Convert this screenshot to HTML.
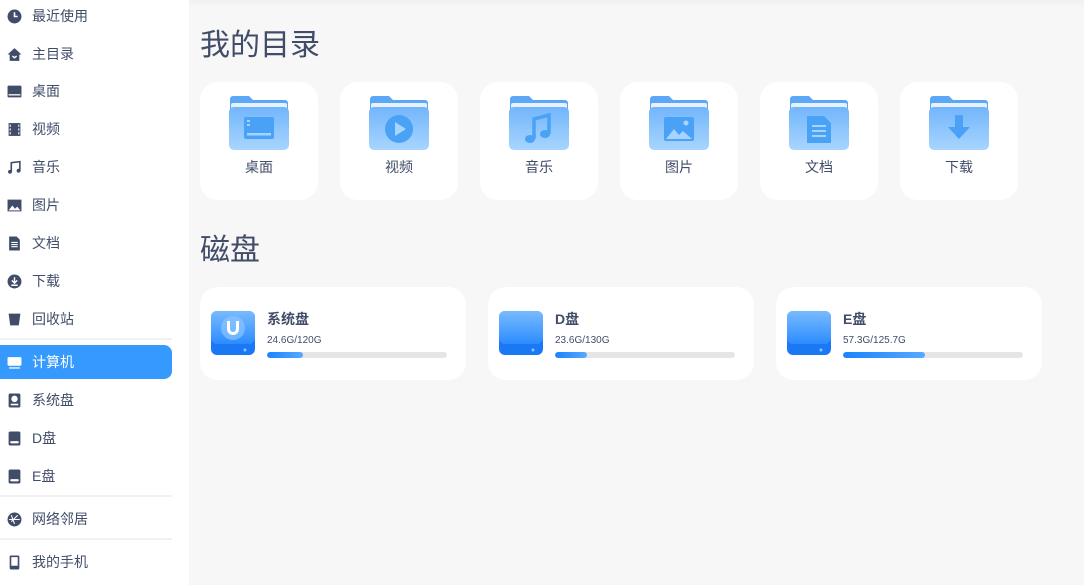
<!DOCTYPE html><html><head><meta charset="utf-8"><style>
*{margin:0;padding:0;box-sizing:border-box}
body{width:1084px;height:585px;overflow:hidden;background:#f7f7f7;font-family:"Liberation Sans","Noto Sans CJK SC",sans-serif;color:#414d68;position:relative}
.sb{position:absolute;left:0;top:0;width:189px;height:585px;background:#fff}
.it{position:absolute;left:0;width:172px;height:34px;display:flex;align-items:center;font-size:14px;color:#414d68}
.it svg{position:absolute;left:7px;width:15px;height:15px}
.it span{position:absolute;left:32px}
.sel{background:#3599fe;color:#fff;border-radius:0 8px 8px 0;}
.sep{position:absolute;left:0;width:172px;height:2px;background:#f1f1f1}
h1{position:absolute;left:200px;font-size:30px;font-weight:normal;color:#414d68}
.card{position:absolute;top:82px;width:118px;height:118px;background:#fff;border-radius:18px}
.card svg{position:absolute;left:29px;top:13px}
.card span{position:absolute;left:0;right:0;top:75px;text-align:center;font-size:14px}
.disk{position:absolute;top:287px;width:266px;height:93px;background:#fff;border-radius:18px}
.disk .ic{position:absolute;left:11px;top:24px}
.disk b{position:absolute;left:67px;top:22px;font-size:14px}
.disk i{position:absolute;left:67px;top:48px;font-size:10px;font-style:normal}
.bar{position:absolute;left:67px;top:65px;width:180px;height:6px;border-radius:3px;background:#e5e5e5;overflow:hidden}
.bar div{height:6px;border-radius:3px;background:linear-gradient(90deg,#1a84ff,#56a9ff)}
</style></head><body>
<svg width="0" height="0" style="position:absolute"><defs><linearGradient id="fg" x1="0" y1="0" x2="0" y2="1"><stop offset="0" stop-color="#72b5fb"/><stop offset="1" stop-color="#a8d5ff"/></linearGradient><linearGradient id="dg" x1="0" y1="0" x2="0" y2="1"><stop offset="0" stop-color="#79bbff"/><stop offset="1" stop-color="#2b8cff"/></linearGradient></defs></svg>
<div class="sb">
<div class="it" style="top:-1px"><svg viewBox="0 0 14 14"><circle cx="7" cy="7" r="6.5" fill="#414d68"/><path d="M7 3v4h3" stroke="#fff" stroke-width="1.5" fill="none"/></svg><span>最近使用</span></div>
<div class="it" style="top:37px"><svg viewBox="0 0 14 14"><path d="M7 1L0.5 7H2.5V13H11.5V7H13.5Z" fill="#414d68"/><path d="M5 8.5l2 1.5 2-1.5" stroke="#fff" fill="none" stroke-width="1.3"/></svg><span>主目录</span></div>
<div class="it" style="top:74px"><svg viewBox="0 0 14 14"><rect x="0.5" y="1.5" width="13" height="11" rx="1" fill="#414d68"/><rect x="1.5" y="9.5" width="11" height="1.2" fill="#fff"/></svg><span>桌面</span></div>
<div class="it" style="top:112px"><svg viewBox="0 0 14 14"><rect x="1.5" y="1" width="11" height="12" fill="#414d68"/><path d="M3 2.5v2M3 6v2M3 9.5v2M11 2.5v2M11 6v2M11 9.5v2" stroke="#fff" stroke-width="1"/></svg><span>视频</span></div>
<div class="it" style="top:150px"><svg viewBox="0 0 14 14"><path d="M4 11V2.5L12 1.5V10" stroke="#414d68" stroke-width="1.5" fill="none"/><circle cx="2.8" cy="11" r="1.8" fill="#414d68"/><circle cx="10.8" cy="10" r="1.8" fill="#414d68"/></svg><span>音乐</span></div>
<div class="it" style="top:188px"><svg viewBox="0 0 14 14"><rect x="0.5" y="1.5" width="13" height="11" fill="#414d68"/><path d="M1.5 11.5L5 7l2.5 3 2-2 3 3.5z" fill="#fff"/></svg><span>图片</span></div>
<div class="it" style="top:226px"><svg viewBox="0 0 14 14"><path d="M2 0.5h7l3 3v10H2z" fill="#414d68"/><path d="M4 6h6M4 8h6M4 10h6" stroke="#fff"/></svg><span>文档</span></div>
<div class="it" style="top:264px"><svg viewBox="0 0 14 14"><circle cx="7" cy="7" r="6.5" fill="#414d68"/><path d="M7 3v5M4.5 6l2.5 2.5L9.5 6M4 10.5h6" stroke="#fff" stroke-width="1.3" fill="none"/></svg><span>下载</span></div>
<div class="it" style="top:302px"><svg viewBox="0 0 14 14"><path d="M1.5 1.5h11l-1.5 11h-8z" fill="#414d68"/></svg><span>回收站</span></div>
<div class="sep" style="top:338px"></div>
<div class="it sel" style="top:345px"><svg viewBox="0 0 14 14"><rect x="0.5" y="2" width="13" height="8" rx="1" fill="#fff"/><rect x="2" y="11.5" width="10" height="1.2" fill="#fff"/></svg><span>计算机</span></div>
<div class="it" style="top:383px"><svg viewBox="0 0 14 14"><rect x="1.5" y="0.5" width="11" height="13" rx="1.5" fill="#414d68"/><circle cx="7" cy="5.5" r="3" fill="#fff"/><rect x="3.5" y="10" width="7" height="1.5" fill="#fff"/></svg><span>系统盘</span></div>
<div class="it" style="top:421px"><svg viewBox="0 0 14 14"><rect x="1.5" y="0.5" width="11" height="13" rx="1.5" fill="#414d68"/><rect x="3" y="9.5" width="8" height="2" rx="1" fill="#fff"/></svg><span>D盘</span></div>
<div class="it" style="top:459px"><svg viewBox="0 0 14 14"><rect x="1.5" y="0.5" width="11" height="13" rx="1.5" fill="#414d68"/><rect x="3" y="9.5" width="8" height="2" rx="1" fill="#fff"/></svg><span>E盘</span></div>
<div class="sep" style="top:495px"></div>
<div class="it" style="top:502px"><svg viewBox="0 0 14 14"><circle cx="7" cy="7" r="6.5" fill="#414d68"/><path d="M4 3l3 8M10 3L4 9M2 7h10" stroke="#fff" stroke-width="1"/></svg><span>网络邻居</span></div>
<div class="sep" style="top:538px"></div>
<div class="it" style="top:545px"><svg viewBox="0 0 14 14"><rect x="2.5" y="0.5" width="9" height="13" rx="1" fill="#414d68"/><rect x="4" y="2" width="6" height="8" fill="#fff"/></svg><span>我的手机</span></div>
</div>
<div style="position:absolute;left:189px;top:0;width:895px;height:8px;background:linear-gradient(#f0f0f0,#f7f7f7)"></div>
<h1 style="top:20px">我的目录</h1>
<div class="card" style="left:200px"><svg width="60" height="56" viewBox="0 0 60 56"><path d="M1 4a3 3 0 0 1 3-3h16l4 4h32a3 3 0 0 1 3 3v6H1z" fill="#5da8f6"/><rect x="2" y="8" width="56" height="6" rx="2" fill="#e6f1fc"/><rect x="0" y="12" width="60" height="43" rx="5" fill="url(#fg)"/><rect x="15" y="22" width="30" height="22" rx="2" fill="#4aa2f7"/><rect x="18" y="25" width="3" height="2" fill="#a6d3ff"/><rect x="18" y="29" width="3" height="2" fill="#a6d3ff"/><rect x="18" y="38" width="24" height="2.5" fill="#a6d3ff"/></svg><span>桌面</span></div>
<div class="card" style="left:340px"><svg width="60" height="56" viewBox="0 0 60 56"><path d="M1 4a3 3 0 0 1 3-3h16l4 4h32a3 3 0 0 1 3 3v6H1z" fill="#5da8f6"/><rect x="2" y="8" width="56" height="6" rx="2" fill="#e6f1fc"/><rect x="0" y="12" width="60" height="43" rx="5" fill="url(#fg)"/><circle cx="30" cy="34" r="14" fill="#4aa2f7"/><path d="M26 27v14l11-7z" fill="#a6d3ff"/></svg><span>视频</span></div>
<div class="card" style="left:480px"><svg width="60" height="56" viewBox="0 0 60 56"><path d="M1 4a3 3 0 0 1 3-3h16l4 4h32a3 3 0 0 1 3 3v6H1z" fill="#5da8f6"/><rect x="2" y="8" width="56" height="6" rx="2" fill="#e6f1fc"/><rect x="0" y="12" width="60" height="43" rx="5" fill="url(#fg)"/><path d="M25 44V24l15-4v19" stroke="#4aa2f7" stroke-width="3.5" fill="none"/><ellipse cx="21" cy="44" rx="5" ry="4" fill="#4aa2f7"/><ellipse cx="36" cy="39" rx="5" ry="4" fill="#4aa2f7"/></svg><span>音乐</span></div>
<div class="card" style="left:620px"><svg width="60" height="56" viewBox="0 0 60 56"><path d="M1 4a3 3 0 0 1 3-3h16l4 4h32a3 3 0 0 1 3 3v6H1z" fill="#5da8f6"/><rect x="2" y="8" width="56" height="6" rx="2" fill="#e6f1fc"/><rect x="0" y="12" width="60" height="43" rx="5" fill="url(#fg)"/><rect x="15" y="22" width="30" height="24" rx="2" fill="#4aa2f7"/><path d="M17 44l8-10 5 6 4-4 9 8z" fill="#a6d3ff"/><circle cx="37" cy="28" r="2.5" fill="#a6d3ff"/></svg><span>图片</span></div>
<div class="card" style="left:760px"><svg width="60" height="56" viewBox="0 0 60 56"><path d="M1 4a3 3 0 0 1 3-3h16l4 4h32a3 3 0 0 1 3 3v6H1z" fill="#5da8f6"/><rect x="2" y="8" width="56" height="6" rx="2" fill="#e6f1fc"/><rect x="0" y="12" width="60" height="43" rx="5" fill="url(#fg)"/><path d="M18 21h17l7 7v20H18z" fill="#4aa2f7"/><path d="M23 31h14M23 36h14M23 41h14" stroke="#a6d3ff" stroke-width="2"/></svg><span>文档</span></div>
<div class="card" style="left:900px"><svg width="60" height="56" viewBox="0 0 60 56"><path d="M1 4a3 3 0 0 1 3-3h16l4 4h32a3 3 0 0 1 3 3v6H1z" fill="#5da8f6"/><rect x="2" y="8" width="56" height="6" rx="2" fill="#e6f1fc"/><rect x="0" y="12" width="60" height="43" rx="5" fill="url(#fg)"/><path d="M26 20h8v12h7L30 44 19 32h7z" fill="#4aa2f7"/></svg><span>下载</span></div>
<h1 style="top:225px">磁盘</h1>
<div class="disk" style="left:200px"><svg class="ic" width="44" height="44" viewBox="0 0 44 44"><rect x="0" y="0" width="44" height="44" rx="6" fill="#1a78f5"/><rect x="0" y="0" width="44" height="33" rx="6" fill="url(#dg)"/><circle cx="22" cy="17" r="12" fill="#8cc4ff" opacity=".7"/><path d="M17.5 10v8a4.5 4.5 0 0 0 9 0v-8" stroke="#fff" stroke-width="3" fill="none"/><circle cx="34" cy="39" r="1.5" fill="#8cc4ff"/></svg><b>系统盘</b><i>24.6G/120G</i><div class="bar"><div style="width:36px"></div></div></div>
<div class="disk" style="left:488px"><svg class="ic" width="44" height="44" viewBox="0 0 44 44"><rect x="0" y="0" width="44" height="44" rx="6" fill="#1a78f5"/><rect x="0" y="0" width="44" height="33" rx="6" fill="url(#dg)"/><circle cx="34" cy="39" r="1.5" fill="#8cc4ff"/></svg><b>D盘</b><i>23.6G/130G</i><div class="bar"><div style="width:32px"></div></div></div>
<div class="disk" style="left:776px"><svg class="ic" width="44" height="44" viewBox="0 0 44 44"><rect x="0" y="0" width="44" height="44" rx="6" fill="#1a78f5"/><rect x="0" y="0" width="44" height="33" rx="6" fill="url(#dg)"/><circle cx="34" cy="39" r="1.5" fill="#8cc4ff"/></svg><b>E盘</b><i>57.3G/125.7G</i><div class="bar"><div style="width:82px"></div></div></div>
</body></html>
